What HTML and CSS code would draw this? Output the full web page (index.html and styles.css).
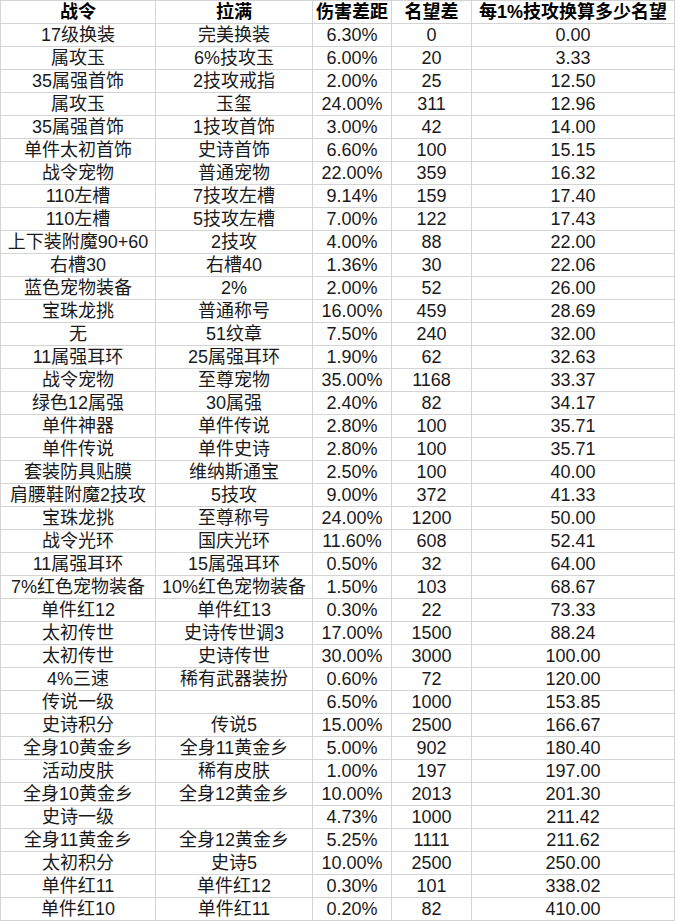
FILE: index.html
```html
<!DOCTYPE html>
<html lang="zh">
<head>
<meta charset="utf-8">
<title>战令</title>
<link rel="stylesheet" href="styles.css">
</head>
<body>
<table class="sheet">
<colgroup>
<col class="c1"><col class="c2"><col class="c3"><col class="c4"><col class="c5">
</colgroup>
<thead>
<tr><th>战令</th><th>拉满</th><th>伤害差距</th><th>名望差</th><th>每1%技攻换算多少名望</th></tr>
</thead>
<tbody>
<tr><td>17级换装</td><td>完美换装</td><td>6.30%</td><td>0</td><td>0.00</td></tr>
<tr><td>属攻玉</td><td>6%技攻玉</td><td>6.00%</td><td>20</td><td>3.33</td></tr>
<tr><td>35属强首饰</td><td>2技攻戒指</td><td>2.00%</td><td>25</td><td>12.50</td></tr>
<tr><td>属攻玉</td><td>玉玺</td><td>24.00%</td><td>311</td><td>12.96</td></tr>
<tr><td>35属强首饰</td><td>1技攻首饰</td><td>3.00%</td><td>42</td><td>14.00</td></tr>
<tr><td>单件太初首饰</td><td>史诗首饰</td><td>6.60%</td><td>100</td><td>15.15</td></tr>
<tr><td>战令宠物</td><td>普通宠物</td><td>22.00%</td><td>359</td><td>16.32</td></tr>
<tr><td>110左槽</td><td>7技攻左槽</td><td>9.14%</td><td>159</td><td>17.40</td></tr>
<tr><td>110左槽</td><td>5技攻左槽</td><td>7.00%</td><td>122</td><td>17.43</td></tr>
<tr><td>上下装附魔90+60</td><td>2技攻</td><td>4.00%</td><td>88</td><td>22.00</td></tr>
<tr><td>右槽30</td><td>右槽40</td><td>1.36%</td><td>30</td><td>22.06</td></tr>
<tr><td>蓝色宠物装备</td><td>2%</td><td>2.00%</td><td>52</td><td>26.00</td></tr>
<tr><td>宝珠龙挑</td><td>普通称号</td><td>16.00%</td><td>459</td><td>28.69</td></tr>
<tr><td>无</td><td>51纹章</td><td>7.50%</td><td>240</td><td>32.00</td></tr>
<tr><td>11属强耳环</td><td>25属强耳环</td><td>1.90%</td><td>62</td><td>32.63</td></tr>
<tr><td>战令宠物</td><td>至尊宠物</td><td>35.00%</td><td>1168</td><td>33.37</td></tr>
<tr><td>绿色12属强</td><td>30属强</td><td>2.40%</td><td>82</td><td>34.17</td></tr>
<tr><td>单件神器</td><td>单件传说</td><td>2.80%</td><td>100</td><td>35.71</td></tr>
<tr><td>单件传说</td><td>单件史诗</td><td>2.80%</td><td>100</td><td>35.71</td></tr>
<tr><td>套装防具贴膜</td><td>维纳斯通宝</td><td>2.50%</td><td>100</td><td>40.00</td></tr>
<tr><td>肩腰鞋附魔2技攻</td><td>5技攻</td><td>9.00%</td><td>372</td><td>41.33</td></tr>
<tr><td>宝珠龙挑</td><td>至尊称号</td><td>24.00%</td><td>1200</td><td>50.00</td></tr>
<tr><td>战令光环</td><td>国庆光环</td><td>11.60%</td><td>608</td><td>52.41</td></tr>
<tr><td>11属强耳环</td><td>15属强耳环</td><td>0.50%</td><td>32</td><td>64.00</td></tr>
<tr><td>7%红色宠物装备</td><td>10%红色宠物装备</td><td>1.50%</td><td>103</td><td>68.67</td></tr>
<tr><td>单件红12</td><td>单件红13</td><td>0.30%</td><td>22</td><td>73.33</td></tr>
<tr><td>太初传世</td><td>史诗传世调3</td><td>17.00%</td><td>1500</td><td>88.24</td></tr>
<tr><td>太初传世</td><td>史诗传世</td><td>30.00%</td><td>3000</td><td>100.00</td></tr>
<tr><td>4%三速</td><td>稀有武器装扮</td><td>0.60%</td><td>72</td><td>120.00</td></tr>
<tr><td>传说一级</td><td></td><td>6.50%</td><td>1000</td><td>153.85</td></tr>
<tr><td>史诗积分</td><td>传说5</td><td>15.00%</td><td>2500</td><td>166.67</td></tr>
<tr><td>全身10黄金乡</td><td>全身11黄金乡</td><td>5.00%</td><td>902</td><td>180.40</td></tr>
<tr><td>活动皮肤</td><td>稀有皮肤</td><td>1.00%</td><td>197</td><td>197.00</td></tr>
<tr><td>全身10黄金乡</td><td>全身12黄金乡</td><td>10.00%</td><td>2013</td><td>201.30</td></tr>
<tr><td>史诗一级</td><td></td><td>4.73%</td><td>1000</td><td>211.42</td></tr>
<tr><td>全身11黄金乡</td><td>全身12黄金乡</td><td>5.25%</td><td>1111</td><td>211.62</td></tr>
<tr><td>太初积分</td><td>史诗5</td><td>10.00%</td><td>2500</td><td>250.00</td></tr>
<tr><td>单件红11</td><td>单件红12</td><td>0.30%</td><td>101</td><td>338.02</td></tr>
<tr><td>单件红10</td><td>单件红11</td><td>0.20%</td><td>82</td><td>410.00</td></tr>
</tbody>
</table>
</body>
</html>
```

FILE: styles.css
```css
html, body {
  margin: 0;
  padding: 0;
  background: #ffffff;
}

.sheet {
  border-collapse: collapse;
  table-layout: fixed;
  width: 674px;
  font-family: "Liberation Sans", "Noto Sans CJK SC", sans-serif;
  font-size: 18px;
  color: #1a1a1a;
}

.c1 { width: 155px; }
.c2 { width: 157px; }
.c3 { width: 79px; }
.c4 { width: 80px; }
.c5 { width: 203px; }

.sheet th,
.sheet td {
  border: 1px solid #d4d4d4;
  height: 22px;
  padding: 0;
  text-align: center;
  vertical-align: middle;
  white-space: nowrap;
  overflow: hidden;
  line-height: 20px;
}

.sheet th {
  font-weight: bold;
  color: #000000;
}
```
